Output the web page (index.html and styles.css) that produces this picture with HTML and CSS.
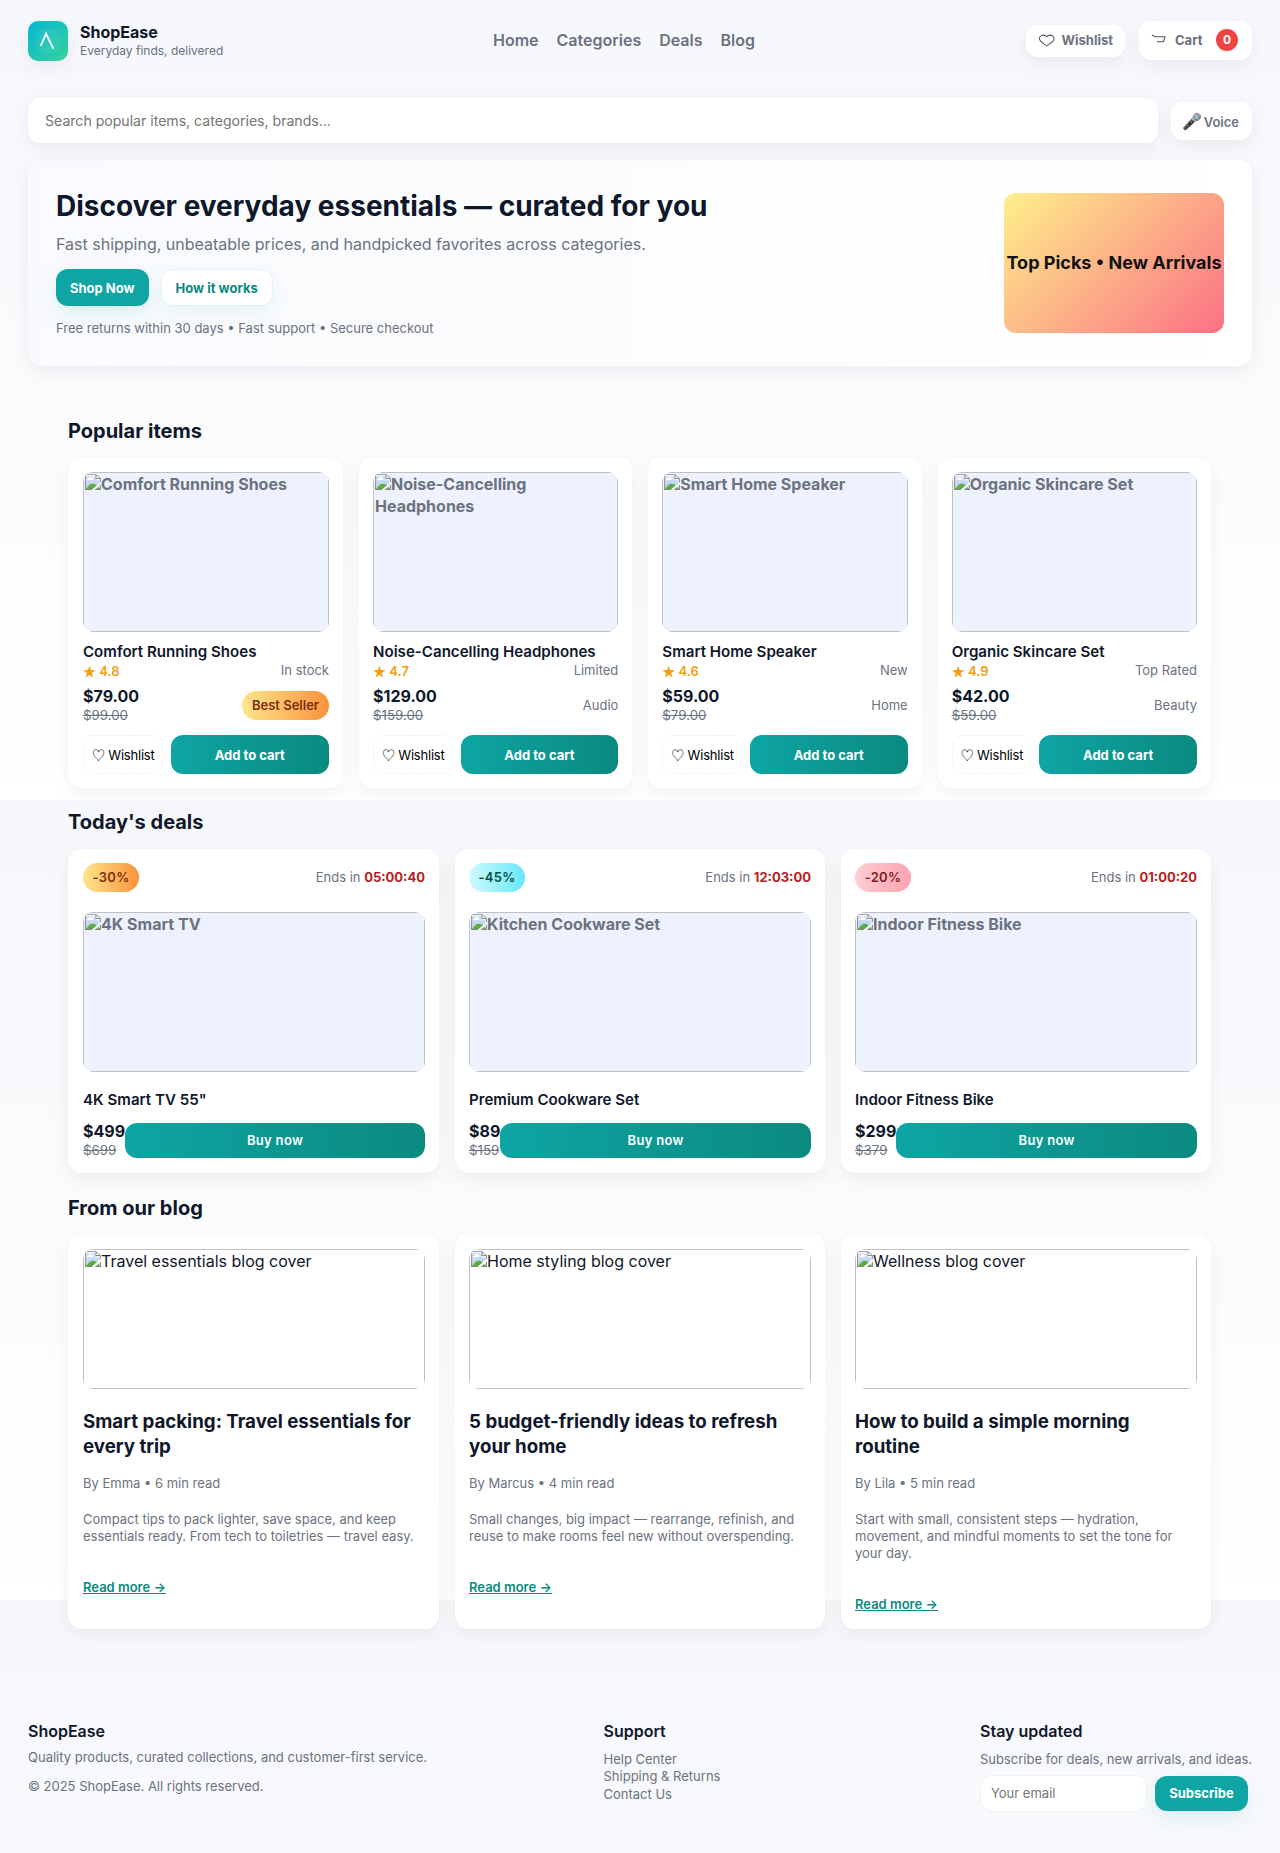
FILE: index.html
```html
<html lang="en">
<head>
<meta charset="utf-8">
<title>ShopEase</title>
<link rel="stylesheet" href="styles.css">
</head>
<body>
<header class="site-header">
  <div class="brand">
    <div class="logo"><svg viewBox="0 0 40 40" width="40" height="40"><rect x="8" y="8" width="24" height="24" rx="6" fill="#fff" fill-opacity=".06"/><path d="M12.700 25 L18 12.700 L25.300 27.700" fill="none" stroke="#fff" stroke-width="1.800"/></svg></div>
    <div class="brand-text"><div class="brand-name">ShopEase</div><div class="brand-tag">Everyday finds, delivered</div></div>
  </div>
  <nav class="nav"><a>Home</a><a>Categories</a><a>Deals</a><a>Blog</a></nav>
  <div class="header-actions">
    <button class="pill-btn wish"><svg viewBox="0 0 18 18" width="18" height="18"><path d="M9 15 C6.500 13 1.500 11 1.500 7.500 C1.500 5.500 3.500 4 5.500 4 C7 4 8.300 4.600 9 5.600 C9.700 4.600 11 4 12.500 4 C14.500 4 16.500 5.500 16.500 7.500 C16.500 11 11.500 13 9 15Z" fill="none" stroke="#4b5563" stroke-width="1.100"/></svg><span>Wishlist</span></button>
    <button class="pill-btn cart"><svg viewBox="0 0 18 18" width="18" height="18"><path d="M1 4 L4 5.700 L14 5.700 L12.500 10.700 L6 10.700" fill="none" stroke="#4b5563" stroke-width="1.100"/></svg><span>Cart</span><span class="count">0</span></button>
  </div>
</header>

<div class="search-row">
  <input class="search" type="text" placeholder="Search popular items, categories, brands...">
  <button class="voice"><span class="mic">🎤</span> Voice</button>
</div>

<section class="hero">
  <div class="hero-copy">
    <h1>Discover everyday essentials — curated for you</h1>
    <p class="hero-sub">Fast shipping, unbeatable prices, and handpicked favorites across categories.</p>
    <div class="hero-cta"><button class="btn-primary">Shop Now</button><button class="btn-ghost">How it works</button></div>
    <p class="hero-note">Free returns within 30 days • Fast support • Secure checkout</p>
  </div>
  <div class="hero-art">Top Picks • New Arrivals</div>
</section>

<main class="main">
  <section class="popular">
    <h2>Popular items</h2>
    <div class="grid-4">
      <article class="card">
        <img class="thumb" src="shoes.jpg" alt="Comfort Running Shoes">
        <h3>Comfort Running Shoes</h3>
        <div class="row rating-row"><span class="rating"><span class="sym">★</span> 4.8</span><span class="muted">In stock</span></div>
        <div class="row price-row"><div><div class="price">$79.00</div><s class="was">$99.00</s></div><span class="tag tag-orange">Best Seller</span></div>
        <div class="actions"><button class="wish-btn"><span class="sym">♡</span> Wishlist</button><button class="cta">Add to cart</button></div>
      </article>
      <article class="card">
        <img class="thumb" src="headphones.jpg" alt="Noise-Cancelling Headphones">
        <h3>Noise-Cancelling Headphones</h3>
        <div class="row rating-row"><span class="rating"><span class="sym">★</span> 4.7</span><span class="muted">Limited</span></div>
        <div class="row price-row"><div><div class="price">$129.00</div><s class="was">$159.00</s></div><span class="muted">Audio</span></div>
        <div class="actions"><button class="wish-btn"><span class="sym">♡</span> Wishlist</button><button class="cta">Add to cart</button></div>
      </article>
      <article class="card">
        <img class="thumb" src="speaker.jpg" alt="Smart Home Speaker">
        <h3>Smart Home Speaker</h3>
        <div class="row rating-row"><span class="rating"><span class="sym">★</span> 4.6</span><span class="muted">New</span></div>
        <div class="row price-row"><div><div class="price">$59.00</div><s class="was">$79.00</s></div><span class="muted">Home</span></div>
        <div class="actions"><button class="wish-btn"><span class="sym">♡</span> Wishlist</button><button class="cta">Add to cart</button></div>
      </article>
      <article class="card">
        <img class="thumb" src="skincare.jpg" alt="Organic Skincare Set">
        <h3>Organic Skincare Set</h3>
        <div class="row rating-row"><span class="rating"><span class="sym">★</span> 4.9</span><span class="muted">Top Rated</span></div>
        <div class="row price-row"><div><div class="price">$42.00</div><s class="was">$59.00</s></div><span class="muted">Beauty</span></div>
        <div class="actions"><button class="wish-btn"><span class="sym">♡</span> Wishlist</button><button class="cta">Add to cart</button></div>
      </article>
    </div>
  </section>

  <section class="deals">
    <h2>Today's deals</h2>
    <div class="grid-3">
      <article class="card">
        <div class="row deal-top"><span class="tag tag-orange">-30%</span><span class="muted">Ends in <b class="timer">05:00:40</b></span></div>
        <img class="thumb" src="tv.jpg" alt="4K Smart TV">
        <h3 class="deal-title">4K Smart TV 55"</h3>
        <div class="deal-buy"><div><div class="price">$499</div><s class="was">$699</s></div><button class="cta buy">Buy now</button></div>
      </article>
      <article class="card">
        <div class="row deal-top"><span class="tag tag-cyan">-45%</span><span class="muted">Ends in <b class="timer">12:03:00</b></span></div>
        <img class="thumb" src="cookware.jpg" alt="Kitchen Cookware Set">
        <h3 class="deal-title">Premium Cookware Set</h3>
        <div class="deal-buy"><div><div class="price">$89</div><s class="was">$159</s></div><button class="cta buy">Buy now</button></div>
      </article>
      <article class="card">
        <div class="row deal-top"><span class="tag tag-pink">-20%</span><span class="muted">Ends in <b class="timer">01:00:20</b></span></div>
        <img class="thumb" src="bike.jpg" alt="Indoor Fitness Bike">
        <h3 class="deal-title">Indoor Fitness Bike</h3>
        <div class="deal-buy"><div><div class="price">$299</div><s class="was">$379</s></div><button class="cta buy">Buy now</button></div>
      </article>
    </div>
  </section>

  <section class="blog">
    <h2>From our blog</h2>
    <div class="grid-3">
      <article class="card">
        <img class="cover" src="travel.jpg" alt="Travel essentials blog cover">
        <h3 class="post-title">Smart packing: Travel essentials for every trip</h3>
        <div class="post-meta">By Emma • 6 min read</div>
        <p class="post-text">Compact tips to pack lighter, save space, and keep essentials ready. From tech to toiletries — travel easy.</p>
        <a class="read-more">Read more →</a>
      </article>
      <article class="card">
        <img class="cover" src="home.jpg" alt="Home styling blog cover">
        <h3 class="post-title">5 budget-friendly ideas to refresh your home</h3>
        <div class="post-meta">By Marcus • 4 min read</div>
        <p class="post-text">Small changes, big impact — rearrange, refinish, and reuse to make rooms feel new without overspending.</p>
        <a class="read-more">Read more →</a>
      </article>
      <article class="card">
        <img class="cover" src="wellness.jpg" alt="Wellness blog cover">
        <h3 class="post-title">How to build a simple morning routine</h3>
        <div class="post-meta">By Lila • 5 min read</div>
        <p class="post-text">Start with small, consistent steps — hydration, movement, and mindful moments to set the tone for your day.</p>
        <a class="read-more">Read more →</a>
      </article>
    </div>
  </section>
</main>

<footer class="footer">
  <div>
    <div class="foot-head">ShopEase</div>
    <div class="foot-text">Quality products, curated collections, and customer-first service.</div>
    <div class="foot-copy">© 2025 ShopEase. All rights reserved.</div>
  </div>
  <div>
    <div class="foot-head">Support</div>
    <div class="foot-links"><a>Help Center</a><a>Shipping &amp; Returns</a><a>Contact Us</a></div>
  </div>
  <div>
    <div class="foot-head">Stay updated</div>
    <div class="foot-text sub">Subscribe for deals, new arrivals, and ideas.</div>
    <div class="sub-form"><input class="email" type="text" placeholder="Your email"><button class="btn-primary sub-btn">Subscribe</button></div>
  </div>
</footer>
</body>
</html>
```
FILE: styles.css
```css
* { box-sizing: border-box; }
body {
  margin: 0;
  font-family: Inter, "Noto Sans", sans-serif;
  color: #0f172a;
  background: linear-gradient(180deg, #f6f7fb 0, #fff 100%) 0 0 / 100% 800px repeat;
}
button, input { font-family: inherit; }
h1, h2, h3, p { margin: 0; }

.site-header { display: flex; align-items: flex-start; justify-content: space-between; padding: 21px 28px 0; }
.brand { display: flex; align-items: center; gap: 12px; width: 465px; }
.logo { width: 40px; height: 40px; border-radius: 10px; background: linear-gradient(135deg, #06b6d4, #34d399); box-shadow: 0 6px 18px rgba(16,24,40,.06); }
.logo svg { display: block; }
.brand-text { padding-bottom: .5px; }
.brand-name { font-size: 16px; font-weight: 700; line-height: 20px; }
.brand-tag { font-size: 12px; color: #6b7280; line-height: 16.800px; margin-top: 1px; }
.nav { display: flex; gap: 18px; flex: 1; margin-top: 8px; line-height: 22px; }
.nav a { font-size: 16px; font-weight: 600; color: #6b7280; }
.header-actions { display: flex; align-items: flex-start; gap: 14px; }
.pill-btn { display: flex; align-items: center; background: #fff; border: 0; border-radius: 12px; box-shadow: 0 6px 18px rgba(16,24,40,.06); font-size: 13px; font-weight: 700; color: #6b7280; }
.wish { height: 32px; width: 99px; padding: 0 12px 2px; margin-top: 4px; gap: 6px; }
.cart { height: 39px; width: 113px; padding: 0 14px 1px 12px; gap: 6px; }
.count { margin-left: auto; width: 22px; height: 22px; border-radius: 50%; background: #ef4444; color: #fff; font-size: 12px; line-height: 22px; text-align: center; }

.search-row { display: flex; align-items: flex-start; gap: 13px; padding: 0 28px; margin-top: 37px; }
.search { flex: 1; height: 45px; border: 0; outline: 0; border-radius: 12px; padding: 0 17px; background: #fff; font-size: 14.080px; box-shadow: 0 6px 18px rgba(16,24,40,.06); }
.search::placeholder, .email::placeholder { color: #757575; opacity: 1; }
.voice { width: 81px; height: 38px; margin-top: 4px; border: 0; border-radius: 12px; background: #fff; font-size: 13px; font-weight: 600; color: #6b7280; box-shadow: 0 6px 18px rgba(16,24,40,.06); padding: 0 2px 0 0; white-space: nowrap; word-spacing: -1.500px; }
.mic { font-size: 16px; }

.hero { margin: 17px 28px 0; height: 206px; padding: 28px; border-radius: 14px; background: linear-gradient(90deg, #f9fafd, #fff); box-shadow: 0 6px 18px rgba(16,24,40,.06); display: flex; justify-content: space-between; align-items: center; }
.hero h1 { font-size: 28px; font-weight: 700; line-height: 34px; }
.hero-sub { font-size: 16px; color: #6b7280; margin-top: 9px; line-height: 24px; }
.hero-cta { display: flex; gap: 12px; margin-top: 13px; }
.btn-primary { background: #0ea5a4; color: #fff; border: 0; border-radius: 12px; height: 37px; padding: 0 14px; font-size: 13px; font-weight: 700; box-shadow: 0 8px 20px rgba(14,165,164,.12); }
.btn-ghost { background: #fff; color: #0b8a7f; border: 1px solid rgba(14,165,164,.12); border-radius: 12px; height: 37px; padding: 0 14px; font-size: 13px; font-weight: 700; box-shadow: 0 8px 20px rgba(14,165,164,.08); }
.hero-note { font-size: 13px; color: #6b7280; margin-top: 13px; line-height: 18px; }
.hero-art { width: 220px; height: 140px; border-radius: 12px; background: linear-gradient(135deg, #fef08a, #fb7185); display: flex; align-items: center; justify-content: center; font-size: 18px; font-weight: 700; color: #111; white-space: nowrap; padding-bottom: 2px; }

.main { padding: 0 69px 0 68px; }
h2 { font-size: 20px; font-weight: 700; line-height: 24px; }
.popular { margin-top: 53px; }
.deals { margin-top: 22px; }
.blog { margin-top: 23px; }
.grid-4 { display: grid; grid-template-columns: 275px repeat(3, 1fr); gap: 16px; margin-top: 15px; }
.grid-3 { display: grid; grid-template-columns: 371px repeat(2, 1fr); gap: 16px; margin-top: 15px; }
.card { background: #fff; border-radius: 14px; padding: 14px; box-shadow: 0 6px 18px rgba(16,24,40,.06); display: flex; flex-direction: column; align-items: stretch; min-width: 0; }
.card:first-child { padding-left: 15px; }
.blog .card { padding-bottom: 16px; }
.thumb { display: block; width: 100%; height: 160px; border-radius: 10px; background: #eef2ff; font-weight: 700; color: #6b7280; font-size: 16px; line-height: 21.500px; }
.card h3 { font-size: 15.100px; font-weight: 600; line-height: 18px; margin-top: 11px; }
.row { display: flex; align-items: center; justify-content: space-between; }
.rating-row { height: 18px; margin-top: 0; }
.rating { font-size: 13px; font-weight: 600; color: #f59e0b; }
.sym { font-family: "Noto Sans CJK SC", sans-serif; }
.muted { font-size: 13px; color: #6b7280; }
.price-row { margin-top: 7px; }
.price { font-size: 16px; font-weight: 700; line-height: 21px; }
.was { display: block; font-size: 13.300px; color: #6b7280; line-height: 17px; }
.tag { display: inline-block; height: 29px; line-height: 29px; padding: 0 10px; border-radius: 999px; font-size: 13px; font-weight: 600; }
.tag-orange { background: linear-gradient(90deg, #fde68a, #fb923c); color: #7c2d12; }
.tag-cyan { background: linear-gradient(90deg, #cffafe, #67e8f9); color: #064e3b; }
.tag-pink { background: linear-gradient(90deg, #fecdd3, #fda4af); color: #7f1d1d; }
.actions { display: flex; gap: 8px; margin-top: 11px; }
.wish-btn { flex: none; height: 39px; padding: 0 7px 0 8px; background: #fff; border: 1px dashed #f1f1f4; border-radius: 10px; font-size: 13px; letter-spacing: -.2px; color: #000; }
.cta { flex: 1; height: 39px; border: 0; border-radius: 12px; background: linear-gradient(90deg, #0ea5a4, #0b8a7f); color: #fff; font-size: 13px; font-weight: 700; }
.deal-top { height: 29px; margin-bottom: 20px; }
.deal-top .tag { width: 56px; padding: 0; text-align: center; letter-spacing: .3px; }
.deal-top .muted { padding-bottom: 2px; }
.timer { font-weight: 700; color: #b91c1c; }
.card h3.deal-title { margin-top: 19px; }
.deal-buy { display: flex; align-items: center; margin-top: 12px; }
.buy { width: 100%; height: 35px; font-weight: 600; letter-spacing: .3px; }

.cover { display: block; width: 100%; height: 140px; border-radius: 10px; font-size: 16px; }
.card h3.post-title { font-size: 18.720px; line-height: 25.300px; font-weight: 700; margin-top: 20px; }
.post-meta { font-size: 13px; color: #6b7280; margin-top: 14px; line-height: 18px; }
.post-text { font-size: 13px; color: #6b7280; line-height: 17px; margin-top: 19px; }
.read-more { display: block; margin-top: 33px; font-size: 13px; font-weight: 600; color: #0b8a7f; text-decoration: underline; line-height: 18px; }

.footer { display: grid; grid-template-columns: 547.5px 1fr 272px; column-gap: 28px; padding: 0 28px 40px; margin-top: 92px; }
.foot-head { font-size: 16px; font-weight: 600; line-height: 20px; }
.foot-text { font-size: 13px; color: #6b7280; margin-top: 7px; line-height: 18px; }
.foot-copy { font-size: 13px; color: #6b7280; margin-top: 11px; line-height: 18px; }
.foot-links { display: flex; flex-direction: column; margin-top: 10px; font-size: 13px; color: #6b7280; line-height: 17.500px; }
.sub { margin-top: 9px; white-space: nowrap; }
.sub-form { display: flex; gap: 8px; margin-top: 7px; align-items: center; }
.email { width: 167px; height: 37px; border: 1px solid #f1f1f4; border-radius: 12px; padding: 0 10px; font-size: 13px; outline: 0; background: #fff; }
.sub-btn { height: 35px; width: 93px; padding: 0; }
```
